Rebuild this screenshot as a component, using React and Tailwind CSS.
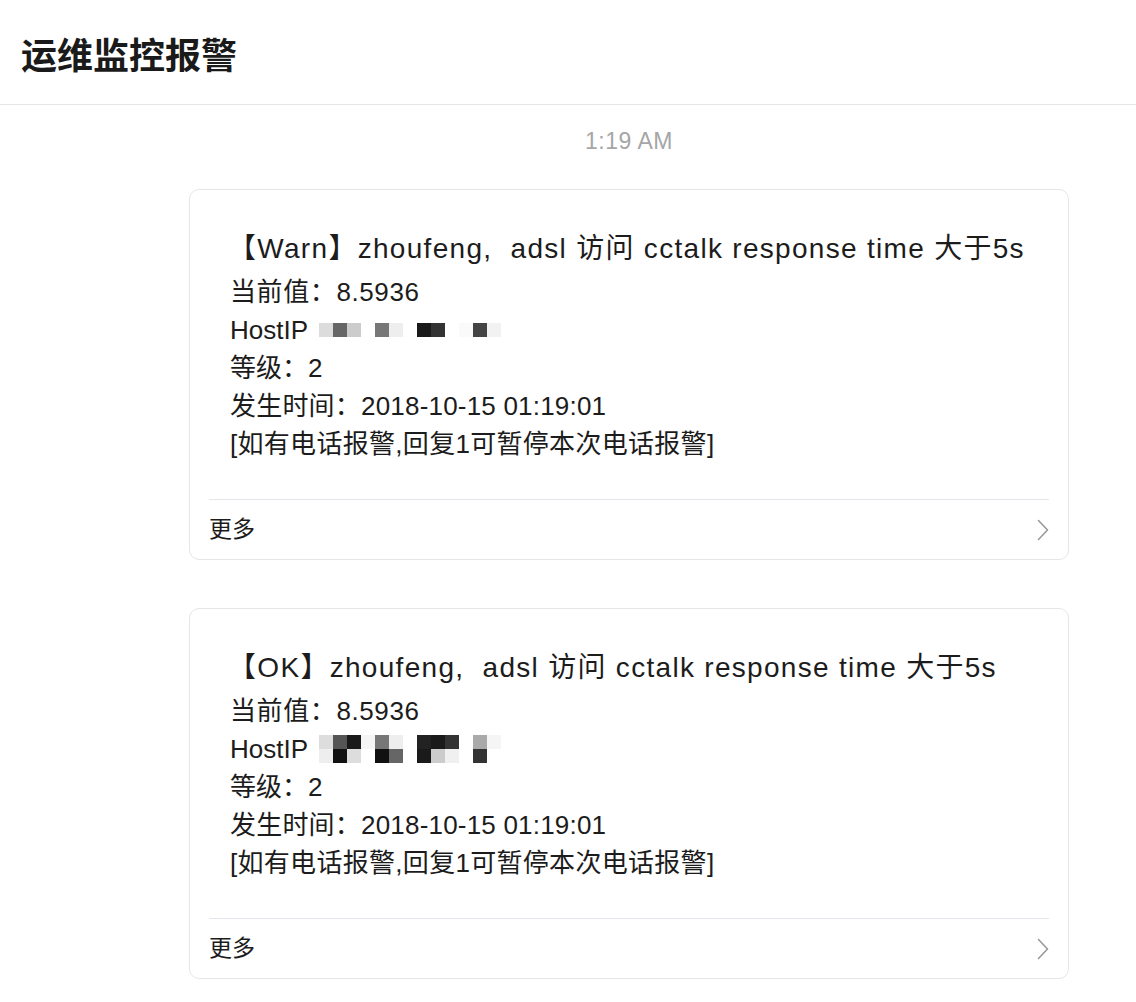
import React from "react";

const font = { fontFamily: '"Liberation Sans", "Noto Sans CJK SC", sans-serif' };

const hostRows = {
  warn: [
    ["#dcdcdc", "#666666", "#cccccc", "#ffffff", "#777777", "#eeeeee", "#ffffff", "#1a1a1a", "#333333", "#ffffff", "#fafafa", "#444444", "#f2f2f2"],
  ],
  ok: [
    ["#dddddd", "#555555", "#1a1a1a", "#f5f5f5", "#777777", "#eeeeee", "#ffffff", "#222222", "#1a1a1a", "#333333", "#ffffff", "#aaaaaa", "#f5f5f5"],
    ["#eeeeee", "#111111", "#dddddd", "#ffffff", "#111111", "#666666", "#ffffff", "#1a1a1a", "#cccccc", "#f0f0f0", "#ffffff", "#333333", "#ffffff"],
  ],
};

const Mosaic = ({ rows }) => (
  <span className="ml-[11px] inline-flex flex-col align-middle">
    {rows.map((row, i) => (
      <span key={i} className="flex">
        {row.map((c, j) => (
          <span key={j} className="h-[14px] w-[14px]" style={{ backgroundColor: c }} />
        ))}
      </span>
    ))}
  </span>
);

const Chevron = () => (
  <svg width="12" height="22" viewBox="0 0 12 22" fill="none">
    <path d="M1.5 1.5 L10.5 11 L1.5 20.5" stroke="#9a9a9a" strokeWidth="1.6" strokeLinecap="round" strokeLinejoin="round" />
  </svg>
);

const AlertCard = ({ level, host }) => (
  <div className="rounded-[10px] border border-[#e6e6e6] bg-white px-[19px]">
    <div className="px-[21px] pt-[40px] pb-[36px] text-[26px] text-[#1c1c1c]">
      <p className="mb-[5px] -ml-[2px] -mr-[12px] whitespace-nowrap text-[28px] leading-[38px] tracking-[1.3px]">【{level}】zhoufeng,&nbsp; adsl 访问 cctalk response time 大于5s</p>
      <p className="leading-[38px] tracking-[0.6px]">当前值：8.5936</p>
      <p className="flex h-[38px] items-center leading-[38px]">
        HostIP
        <Mosaic rows={host} />
      </p>
      <p className="leading-[38px]">等级：2</p>
      <p className="leading-[38px] tracking-[0.2px]">发生时间：2018-10-15 01:19:01</p>
      <p className="leading-[38px] tracking-[0.3px]">[如有电话报警,回复1可暂停本次电话报警]</p>
    </div>
    <div className="flex h-[60px] items-center justify-between border-t border-[#e3e6ea]">
      <span className="text-[23px] text-[#1c1c1c]">更多</span>
      <Chevron />
    </div>
  </div>
);

export default function App() {
  return (
    <div className="min-h-screen bg-white" style={font}>
      <header className="flex h-[105px] items-center border-b border-[#e6e6e6] pl-[21px] pt-[10px]">
        <h1 className="text-[36px] font-bold text-[#1a1a1a]">运维监控报警</h1>
      </header>
      <div className="ml-[189px] w-[880px] pb-[26px]">
        <div className="pt-[22px] pb-[34px] text-center text-[23px] leading-[28px] tracking-[0.5px] text-[#a6a6a6]">1:19 AM</div>
        <div className="flex flex-col gap-[48px]">
          <AlertCard level="Warn" host={hostRows.warn} />
          <AlertCard level="OK" host={hostRows.ok} />
        </div>
      </div>
    </div>
  );
}
